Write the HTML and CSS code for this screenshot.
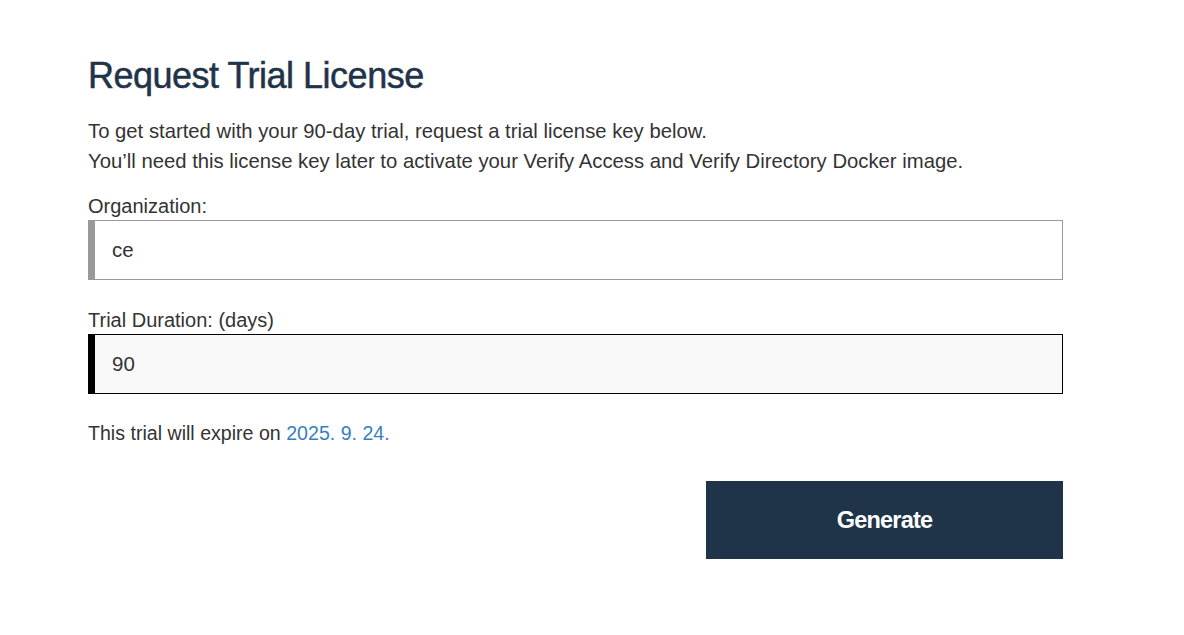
FILE: index.html
```html
<!DOCTYPE html>
<html>
<head>
<meta charset="utf-8">
<link rel="stylesheet" href="styles.css">
</head>
<body>
<main class="page">
  <h1 class="title">Request Trial License</h1>
  <p class="intro">To get started with your 90-day trial, request a trial license key below.<br>You’ll need this license key later to activate your Verify Access and Verify Directory Docker image.</p>
  <label class="label" for="org">Organization:</label>
  <input class="field" id="org" type="text" value="ce">
  <label class="label label-second" for="dur">Trial Duration: (days)</label>
  <input class="field field-active" id="dur" type="text" value="90">
  <p class="expire">This trial will expire on <span class="date">2025. 9. 24.</span></p>
  <div class="actions">
    <button class="btn" type="button">Generate</button>
  </div>
</main>
</body>
</html>
```
FILE: styles.css
```css
html, body {
  margin: 0;
  padding: 0;
  background: #ffffff;
}
body {
  font-family: "Liberation Sans", Arial, sans-serif;
  color: #333333;
}
.page {
  width: 975px;
  padding: 56px 0 0 88px;
  display: flex;
  flex-direction: column;
}
.title {
  margin: 0;
  font-size: 36px;
  font-weight: 400;
  color: #1f3449;
  letter-spacing: -0.5px;
  line-height: 40px;
  -webkit-text-stroke: 0.5px #1f3449;
}
.intro {
  margin: 20px 0 0;
  font-size: 20.3px;
  line-height: 30px;
  color: #333333;
}
.label {
  display: block;
  margin-top: 18px;
  font-size: 20px;
  line-height: 24px;
  color: #333333;
}
.label-second {
  margin-top: 28px;
}
.field {
  box-sizing: border-box;
  width: 975px;
  height: 60px;
  margin-top: 2px;
  padding: 0 0 0 17px;
  border: 1px solid #999999;
  border-left: 7px solid #999999;
  border-radius: 0;
  background: #ffffff;
  font-family: "Liberation Sans", Arial, sans-serif;
  font-size: 20.5px;
  color: #333333;
  outline: none;
}
.field-active {
  border-color: #000000;
  background: #f9f9f9;
}
.expire {
  margin: 27px 0 0;
  font-size: 19.6px;
  line-height: 24px;
  color: #333333;
}
.date {
  color: #3a7ebf;
}
.actions {
  display: flex;
  justify-content: flex-end;
  margin-top: 36px;
}
.btn {
  width: 357px;
  height: 78px;
  border: none;
  border-radius: 0;
  background: #1f3449;
  color: #ffffff;
  font-family: "Liberation Sans", Arial, sans-serif;
  font-size: 23.5px;
  font-weight: 700;
  letter-spacing: -0.8px;
}
```
